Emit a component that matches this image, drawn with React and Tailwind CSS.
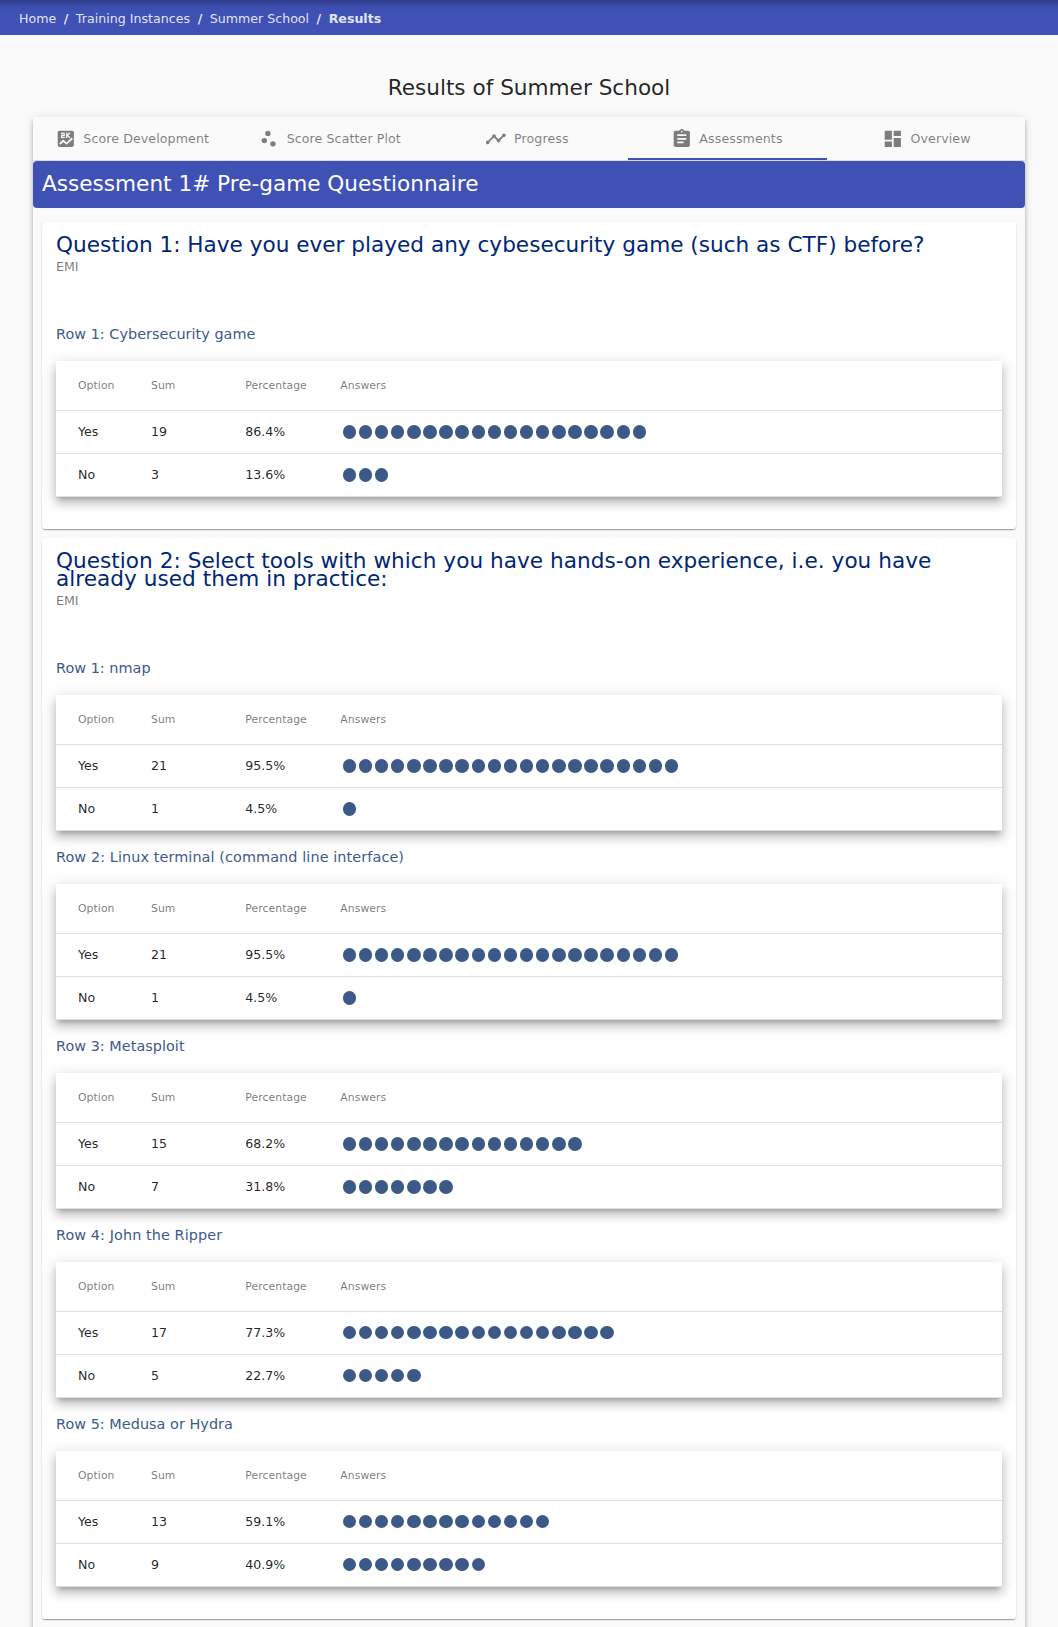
import React from "react";
import { MdScatterPlot, MdTimeline, MdAssignment, MdDashboard } from "react-icons/md";

const ScoreIcon = ({ className }) => (
  <svg viewBox="0 0 24 24" fill="none" className={className}>
    <rect x="3" y="3" width="18" height="18" rx="2" fill="currentColor" />
    <g stroke="#fafafa">
      <path d="M6.6 5.9h3.6v2.2H7.4v2.3h3.6M13 5.2v5.9M16.8 5.3L13.6 8.1l3.2 2.9" strokeWidth="1.4" />
      <path d="M5.4 17.8l3.7-3.6 3.8 3.2 6.4-6" strokeWidth="2" />
    </g>
  </svg>
);

const tabs = [
  { label: "Score Development", Icon: ScoreIcon },
  { label: "Score Scatter Plot", Icon: MdScatterPlot },
  { label: "Progress", Icon: MdTimeline, pad: "pr-[2px]" },
  { label: "Assessments", Icon: MdAssignment, pad: "pr-[2px]", active: true },
  { label: "Overview", Icon: MdDashboard },
];

const questions = [
  {
    title: "Question 1: Have you ever played any cybesecurity game (such as CTF) before?",
    rows: [["Row 1: Cybersecurity game", [["Yes", 19, "86.4%"], ["No", 3, "13.6%"]]]],
  },
  {
    title:
      "Question 2: Select tools with which you have hands-on experience, i.e. you have already used them in practice:",
    tracking: "tracking-[0.03px]",
    rows: [
      ["Row 1: nmap", [["Yes", 21, "95.5%"], ["No", 1, "4.5%"]]],
      ["Row 2: Linux terminal (command line interface)", [["Yes", 21, "95.5%"], ["No", 1, "4.5%"]], "tracking-[0.1px]"],
      ["Row 3: Metasploit", [["Yes", 15, "68.2%"], ["No", 7, "31.8%"]]],
      ["Row 4: John the Ripper", [["Yes", 17, "77.3%"], ["No", 5, "22.7%"]], "tracking-[0.09px]"],
      ["Row 5: Medusa or Hydra", [["Yes", 13, "59.1%"], ["No", 9, "40.9%"]]],
    ],
  },
];

const cols = "grid grid-cols-[73px_94.3px_95px_1fr] items-center pl-[22px] pt-[1px]";

function AnswerTable({ title, options, tracking = "tracking-[0.04px]" }) {
  return (
    <section className="h-[188.9px]">
      <h3 className={`h-[53.1px] pt-[17px] text-[14.4px] leading-[18px] text-[#3d5a8c] ${tracking}`}>{title}</h3>
      <div className="bg-white shadow-[0_4.5px_4.5px_-2.7px_rgba(0,0,0,0.2),0_7.2px_9px_1px_rgba(0,0,0,0.14),0_2.7px_12.6px_1.8px_rgba(0,0,0,0.12)]">
        <div className={`${cols} h-[50px] border-b border-[#e0e0e0] text-[10.8px] tracking-[0.08px] text-black/54`}>
          <span>Option</span>
          <span>Sum</span>
          <span>Percentage</span>
          <span>Answers</span>
        </div>
        {options.map(([name, sum, pct]) => (
          <div key={name} className={`${cols} h-[43px] border-b border-[#e0e0e0] text-[12.6px] text-black/87`}>
            <span>{name}</span>
            <span>{sum}</span>
            <span>{pct}</span>
            <span className="flex gap-[2.65px] pb-[1.2px] pl-[2.4px]">
              {Array.from({ length: sum }, (_, i) => (
                <i key={i} className="h-[13.6px] w-[13.47px] shrink-0 rounded-full bg-[#3d5987]" />
              ))}
            </span>
          </div>
        ))}
      </div>
    </section>
  );
}

export default function App() {
  return (
    <div className="h-[1627px] overflow-hidden bg-[#fafafa] font-['DejaVu_Sans',sans-serif] text-black/87">
      <nav className="flex h-[35px] items-center gap-[7.5px] bg-[linear-gradient(#2f3c87_0px,#34439a_3px,#3c4dac_7px,#3f51b5_13px)] pt-[4px] pl-[19px] text-[12.6px] text-white/87">
        <span>Home</span>
        <b>/</b>
        <span className="tracking-[0.03px]">Training Instances</span>
        <b>/</b>
        <span>Summer School</span>
        <b>/</b>
        <b>Results</b>
      </nav>
      <h1 className="pt-[38.5px] text-center text-[21.6px] leading-[28.8px]">Results of Summer School</h1>
      <main className="mx-[33px] mt-[14.7px] h-[1600px] shadow-[0_1.8px_3.6px_-1px_rgba(0,0,0,0.2),0_3.6px_4.5px_0_rgba(0,0,0,0.14),0_1px_9px_0_rgba(0,0,0,0.12)]">
        <div className="flex h-[44px] border-b border-black/12">
          {tabs.map(({ label, Icon, active, pad = "" }) => (
            <div
              key={label}
              className={`flex flex-1 items-center justify-center gap-[7.2px] text-[12.6px] tracking-[0.1px] text-black/50 ${pad} ${active ? "shadow-[inset_0_-2px_0_#3f51b5]" : ""}`}
            >
              <Icon className="size-[21.6px]" />
              <span className="pt-[1px]">{label}</span>
            </div>
          ))}
        </div>
        <h2 className="h-[47px] rounded-[4px] bg-[#3f51b5] pl-[9px] text-[21.6px] leading-[45px] text-white">
          Assessment 1# Pre-game Questionnaire
        </h2>
        <div className="flex flex-col gap-[9px] px-[9px] pt-[14px]">
          {questions.map(({ title, rows, tracking = "" }) => (
            <article
              key={title}
              className="rounded-[3.6px] bg-white px-[14px] pt-[14px] pb-[32.1px] shadow-[0_1.8px_1px_-1px_rgba(0,0,0,0.2),0_1px_1px_0_rgba(0,0,0,0.14),0_1px_2.7px_0_rgba(0,0,0,0.12)]"
            >
              <h2 className={`text-[21.6px] leading-[18px] text-[#002776] ${tracking}`}>{title}</h2>
              <p className="h-[54px] pt-[4px] text-[12.6px] leading-[18px] text-black/54">EMI</p>
              {rows.map(([rowTitle, options, rowTracking]) => (
                <AnswerTable key={rowTitle} title={rowTitle} options={options} tracking={rowTracking} />
              ))}
            </article>
          ))}
        </div>
      </main>
    </div>
  );
}
